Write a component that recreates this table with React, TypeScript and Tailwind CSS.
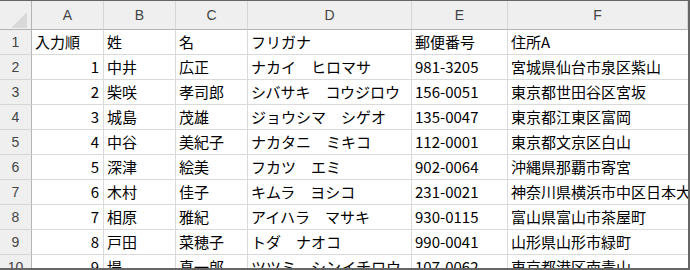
import React from 'react';

const cols = ['A', 'B', 'C', 'D', 'E', 'F'];

const rows: string[][] = [
  ['入力順', '姓', '名', 'フリガナ', '郵便番号', '住所A'],
  ['1', '中井', '広正', 'ナカイ　ヒロマサ', '981-3205', '宮城県仙台市泉区紫山'],
  ['2', '柴咲', '孝司郎', 'シバサキ　コウジロウ', '156-0051', '東京都世田谷区宮坂'],
  ['3', '城島', '茂雄', 'ジョウシマ　シゲオ', '135-0047', '東京都江東区富岡'],
  ['4', '中谷', '美紀子', 'ナカタニ　ミキコ', '112-0001', '東京都文京区白山'],
  ['5', '深津', '絵美', 'フカツ　エミ', '902-0064', '沖縄県那覇市寄宮'],
  ['6', '木村', '佳子', 'キムラ　ヨシコ', '231-0021', '神奈川県横浜市中区日本大通'],
  ['7', '相原', '雅紀', 'アイハラ　マサキ', '930-0115', '富山県富山市茶屋町'],
  ['8', '戸田', '菜穂子', 'トダ　ナオコ', '990-0041', '山形県山形市緑町'],
  ['9', '堤', '真一郎', 'ツツミ　シンイチロウ', '107-0062', '東京都港区南青山'],
];

const App: React.FC = () => {
  return (
    <div className="w-[690px] h-[270px] overflow-hidden bg-white border-t border-r-2 border-b-2 border-[#666666]">
      <div
        className="grid grid-cols-[32px_72px_72px_72px_164px_96px_1fr]"
        style={{ fontFamily: '"Noto Sans CJK JP", "Liberation Sans", sans-serif' }}
      >
        {/* header row */}
        <div className="h-[29px] bg-[#efefef] border-r border-b border-[#b4b4b4] relative">
          <svg className="absolute left-[11px] top-[11px]" width="16" height="16" viewBox="0 0 16 16">
            <polygon points="16,0 16,16 0,16" fill="#d9d9d9" />
          </svg>
        </div>
        {cols.map((c) => (
          <div
            key={c}
            className="h-[29px] bg-[#efefef] border-r border-b border-r-[#d6d6d6] border-b-[#b4b4b4] flex items-center justify-center text-[14px] text-[#444444] font-['Liberation_Sans']"
          >
            {c}
          </div>
        ))}

        {rows.map((r, i) => (
          <React.Fragment key={i}>
            <div className="h-[25px] bg-[#efefef] border-r border-b border-r-[#b4b4b4] border-b-[#d6d6d6] flex items-center justify-center text-[14px] text-[#444444] font-['Liberation_Sans']">
              {i + 1}
            </div>
            {r.map((v, j) => (
              <div
                key={j}
                className={`h-[25px] border-b border-[#dadada] flex items-center text-[15px] text-black whitespace-nowrap overflow-hidden ${
                  j === 5 ? '' : 'border-r'
                } ${i > 0 && j === 0 ? 'justify-end pr-[4px]' : 'pl-[3px]'}`}
              >
                {v}
              </div>
            ))}
          </React.Fragment>
        ))}
      </div>
    </div>
  );
};

export default App;
